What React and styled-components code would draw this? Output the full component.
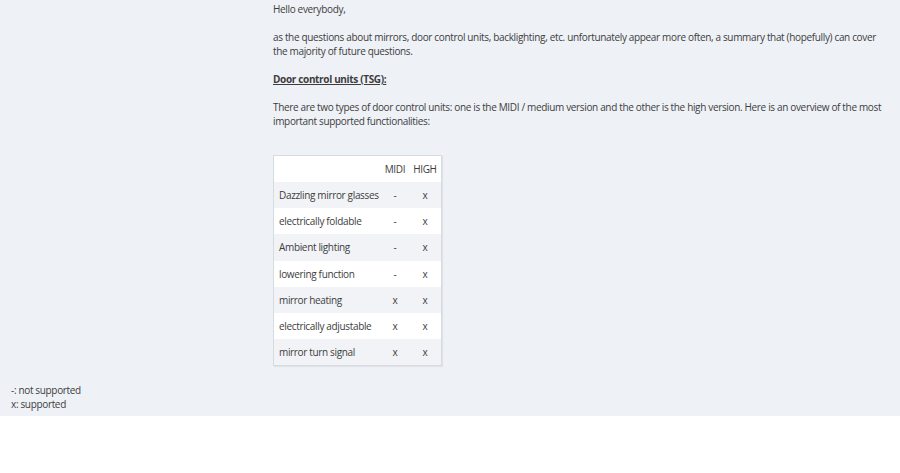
import React from 'react';
import styled, { createGlobalStyle } from 'styled-components';

const GlobalStyle = createGlobalStyle`
    html, body {
        margin: 0;
        padding: 0;
        background: #ffffff;
    }
    body {
        font-family: "Open Sans", "DejaVu Sans", sans-serif;
        font-size: 10px;
        letter-spacing: -0.34px;
        color: #3d3d3d;
    }
`;

const Page = styled('div')`
    background: #eef1f6;
    padding: 2px 0 5px 0;
`;

const Post = styled('div')`
    margin-left: 273px;
    width: 615px;
    line-height: 14px;
`;

const Paragraph = styled('p')`
    margin: 0 0 14px 0;
`;

const Heading = styled('p')`
    margin: 0 0 14px 0;
    font-weight: bold;
    text-decoration: underline;
`;

const Table = styled('table')`
    margin-top: 27px;
    border-collapse: collapse;
    border: 1px solid #d6dbe2;
    box-shadow: 1px 1px 1px rgba(0, 0, 0, 0.06);
    background: #ffffff;
`;

const Row = styled('tr')`
    height: 26.25px;
    background: ${(p) => (p.$striped ? '#f1f3f6' : '#ffffff')};
`;

const Cell = styled('td')`
    padding: ${(p) => (p.$center ? '0 4px' : '0 2px 0 5px')};
    text-align: ${(p) => (p.$center ? 'center' : 'left')};
    white-space: nowrap;
`;

const Legend = styled('div')`
    margin: 17px 0 0 11px;
    line-height: 14px;
`;

const rows = [
    ['Dazzling mirror glasses', '-', 'x'],
    ['electrically foldable', '-', 'x'],
    ['Ambient lighting', '-', 'x'],
    ['lowering function', '-', 'x'],
    ['mirror heating', 'x', 'x'],
    ['electrically adjustable', 'x', 'x'],
    ['mirror turn signal', 'x', 'x']
];

export default function App () {
    return (
        <>
            <GlobalStyle />
            <Page>
                <Post>
                    <Paragraph>Hello everybody,</Paragraph>
                    <Paragraph>
                        as the questions about mirrors, door control units, backlighting, etc. unfortunately appear more often, a summary that (hopefully) can cover the majority of future questions.
                    </Paragraph>
                    <Heading>Door control units (TSG):</Heading>
                    <Paragraph>
                        There are two types of door control units: one is the MIDI / medium version and the other is the high version. Here is an overview of the most important supported functionalities:
                    </Paragraph>
                    <Table>
                        <tbody>
                            <Row>
                                <Cell />
                                <Cell $center>MIDI</Cell>
                                <Cell $center>HIGH</Cell>
                            </Row>
                            {rows.map((r, i) => (
                                <Row key={r[0]} $striped={i % 2 === 0}>
                                    <Cell>{r[0]}</Cell>
                                    <Cell $center>{r[1]}</Cell>
                                    <Cell $center>{r[2]}</Cell>
                                </Row>
                            ))}
                        </tbody>
                    </Table>
                </Post>
                <Legend>
                    -: not supported<br />
                    x: supported
                </Legend>
            </Page>
        </>
    );
}
